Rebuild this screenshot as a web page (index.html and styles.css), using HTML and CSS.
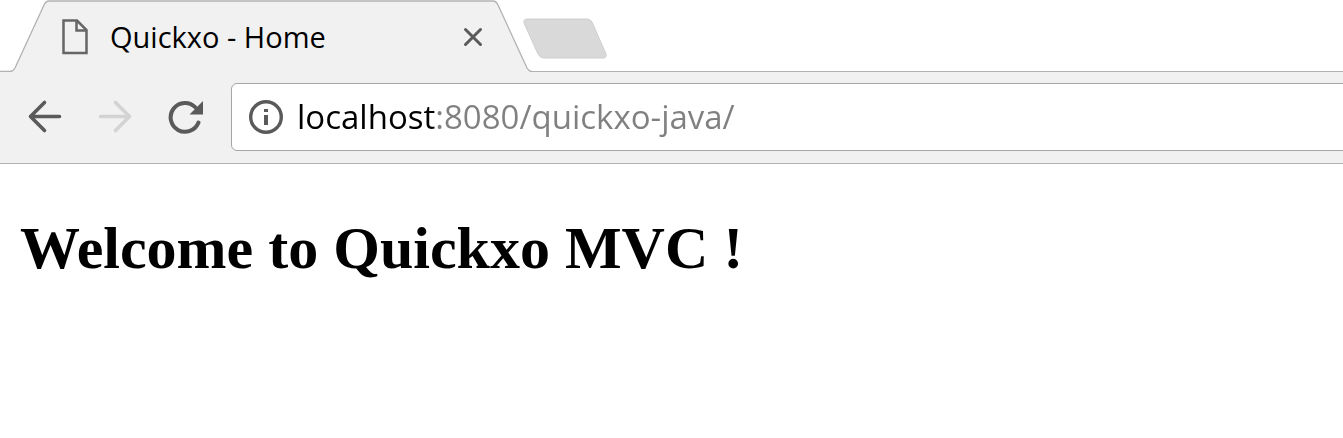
FILE: index.html
```html
<!DOCTYPE html>
<html lang="en">
<head>
<meta charset="utf-8">
<title>Quickxo - Home</title>
<link rel="stylesheet" href="styles.css">
</head>
<body>
<header class="browser">
  <div class="tab-strip">
    <div class="tab">
      <svg class="tab-shape" viewBox="0 0 532 72" aria-hidden="true">
        <path fill="#f1f1f1" d="M0 72V71.500H10Q13 71.500 15 68L44 5Q46 1 49 1H493Q496 1 498 5L527 68Q529 71.500 532 71.500V72Z"/>
        <path fill="none" stroke="#b2b2b2" stroke-width="1.300" d="M0 71.500H10Q13 71.500 15 68L44 5Q46 1 49 1H493Q496 1 498 5L527 68Q529 71.500 532 71.500"/>
      </svg>
      <svg class="page-icon" viewBox="0 0 28 36" aria-hidden="true">
        <path fill="none" stroke="#666" stroke-width="2.500" d="M2.500 1.500H16L25.500 11V34H2.500ZM15.500 1.500V11.500H25.500"/>
      </svg>
      <span class="tab-title">Quickxo - Home</span>
      <button class="tab-close" type="button" aria-label="Close tab">
        <svg viewBox="0 0 20 20" aria-hidden="true"><path fill="none" stroke="#5a5a5a" stroke-width="3" stroke-linecap="round" d="M2.500 2.500L17.500 17.500M17.500 2.500L2.500 17.500"/></svg>
      </button>
    </div>
    <button class="new-tab" type="button" aria-label="New tab">
      <svg viewBox="0 0 84 42" aria-hidden="true"><path fill="#d9d9d9" stroke="#cecece" d="M5 1H64Q67 1 69 4L83 36Q84 40 80 40H21Q17 40 15 36L1 5Q0 1 5 1Z"/></svg>
    </button>
  </div>
  <nav class="toolbar">
    <button class="nav-button" type="button" aria-label="Back">
      <svg viewBox="0 0 36 36" aria-hidden="true"><path fill="none" stroke="#5a5a5a" stroke-width="3.600" stroke-linecap="round" stroke-linejoin="round" d="M17.500 3.500L3.500 17.500L17.500 31.500M3.500 17.500H32.500"/></svg>
    </button>
    <button class="nav-button" type="button" aria-label="Forward" disabled>
      <svg viewBox="0 0 36 36" aria-hidden="true"><path fill="none" stroke="#d3d3d3" stroke-width="3.600" stroke-linecap="round" stroke-linejoin="round" d="M18.500 3.500L32.500 17.500L18.500 31.500M32.500 17.500H3.500"/></svg>
    </button>
    <button class="nav-button" type="button" aria-label="Reload">
      <svg viewBox="0 0 36 36" aria-hidden="true"><path fill="none" stroke="#5a5a5a" stroke-width="4" stroke-linecap="round" d="M31.500 23.500A14.400 14.400 0 1 1 28.500 8.500"/><path fill="#5a5a5a" d="M36 2V15.500H22.500Z"/></svg>
    </button>
    <div class="omnibox">
      <svg class="info-icon" viewBox="0 0 34 34" aria-hidden="true"><circle cx="17" cy="17" r="15.300" fill="none" stroke="#5a5a5a" stroke-width="3.400"/><path fill="#5a5a5a" d="M15 9H19V12H15ZM15 15H19V25H15Z"/></svg>
      <input class="address" type="text" aria-label="Address" value="localhost:8080/quickxo-java/" spellcheck="false">
    </div>
  </nav>
</header>
<main class="page">
  <h2 class="welcome">Welcome to Quickxo MVC !</h2>
</main>
</body>
</html>
```
FILE: styles.css
```css
* {
  box-sizing: border-box;
}

body {
  margin: 0;
  background: #fff;
  color: #000;
  font-family: "Open Sans", "Noto Sans", sans-serif;
}

button {
  padding: 0;
  border: 0;
  background: none;
}

svg {
  display: block;
}

.browser {
  overflow: hidden;
}

.tab-strip {
  display: flex;
  height: 72px;
  background: linear-gradient(#b2b2b2, #b2b2b2) bottom / 100% 1px no-repeat;
}

.tab {
  position: relative;
  display: flex;
  align-items: center;
  width: 532px;
  padding: 2px 49px 0 61px;
}

.tab-shape {
  position: absolute;
  inset: 0;
  width: 100%;
  height: 100%;
}

.page-icon {
  position: relative;
  width: 28px;
  height: 36px;
}

.tab-title {
  position: relative;
  flex: 1;
  margin-left: 21px;
  font-size: 29px;
  font-weight: 400;
  line-height: 40px;
}

.tab-close {
  position: relative;
  width: 20px;
  height: 20px;
}

.tab-close svg {
  width: 100%;
}

.new-tab {
  align-self: flex-start;
  width: 84px;
  margin: 18px 0 0 -9px;
}

.toolbar {
  display: flex;
  align-items: center;
  gap: 34px;
  height: 92px;
  padding: 0 0 1px 27px;
  border-bottom: 1px solid #b2b2b2;
  background: #f1f1f1;
}

.nav-button {
  flex: none;
  width: 36px;
}

.omnibox {
  display: flex;
  flex: 1;
  align-items: center;
  gap: 14px;
  height: 68px;
  margin: 0 -8px 0 -6px;
  padding-left: 17px;
  border: 1px solid #a6a6a6;
  border-radius: 6px;
  background: #fff;
}

.info-icon {
  flex: none;
  width: 34px;
}

.address {
  flex: 1;
  min-width: 0;
  padding: 0;
  border: 0;
  outline: 0;
  background: linear-gradient(90deg, #000 138px, #808080 138px);
  background-clip: text;
  color: transparent;
  font: 400 33px/48px "Open Sans", "Noto Sans", sans-serif;
}

.page {
  padding: 50px 20px;
}

.welcome {
  margin: 0;
  font: bold 60px/69px "Liberation Serif", "Times New Roman", serif;
}
```
